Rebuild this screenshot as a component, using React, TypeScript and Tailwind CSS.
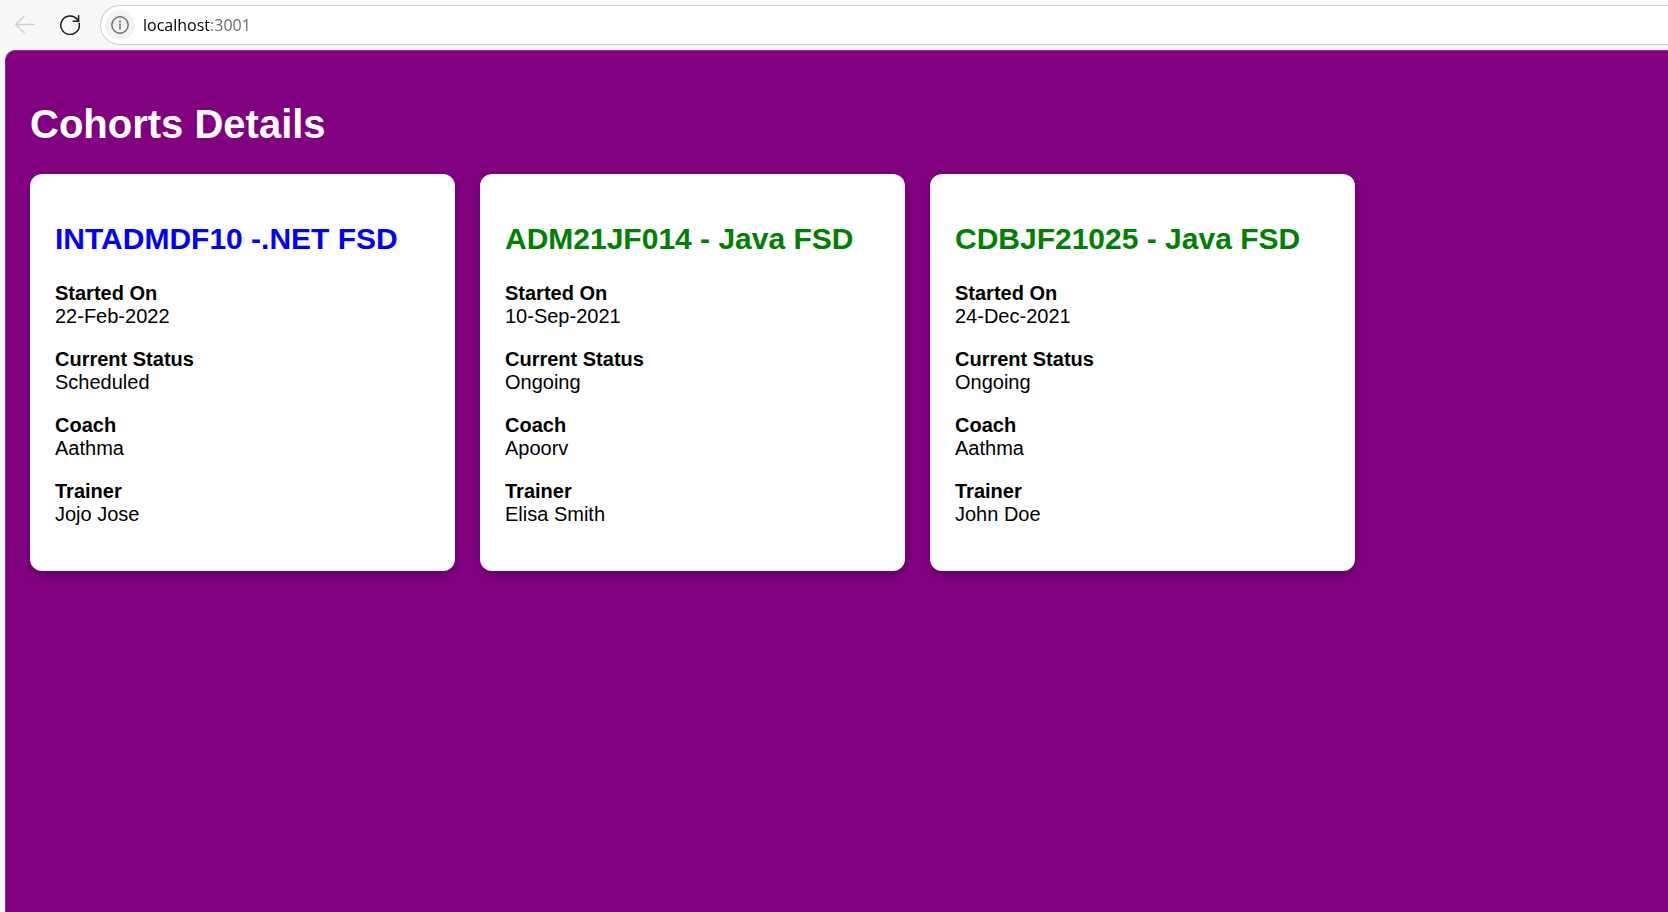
type Cohort = {
  title: string;
  startedOn: string;
  status: "Scheduled" | "Ongoing";
  coach: string;
  trainer: string;
};

const cohorts: Cohort[] = [
  { title: "INTADMDF10 -.NET FSD", startedOn: "22-Feb-2022", status: "Scheduled", coach: "Aathma", trainer: "Jojo Jose" },
  { title: "ADM21JF014 - Java FSD", startedOn: "10-Sep-2021", status: "Ongoing", coach: "Apoorv", trainer: "Elisa Smith" },
  { title: "CDBJF21025 - Java FSD", startedOn: "24-Dec-2021", status: "Ongoing", coach: "Aathma", trainer: "John Doe" },
];

function Detail({ label, value }: { label: string; value: string }) {
  return (
    <div className="flex flex-col gap-px">
      <dt className="font-bold">{label}</dt>
      <dd>{value}</dd>
    </div>
  );
}

function CohortCard({ cohort }: { cohort: Cohort }) {
  const color = cohort.status === "Ongoing" ? "text-[#008000]" : "text-[#0000ff]";
  return (
    <article className="w-[425px] rounded-xl bg-white px-[25px] pt-12 pb-[46px] shadow-[0_5px_10px_rgba(0,0,0,0.2)]">
      <h2 className={`mb-[26px] text-[30px] leading-[34px] font-bold ${color}`}>{cohort.title}</h2>
      <dl className="flex flex-col gap-[21px] text-[20px] leading-[22px] text-black">
        <Detail label="Started On" value={cohort.startedOn} />
        <Detail label="Current Status" value={cohort.status} />
        <Detail label="Coach" value={cohort.coach} />
        <Detail label="Trainer" value={cohort.trainer} />
      </dl>
    </article>
  );
}

function Toolbar() {
  return (
    <header className="flex h-[50px] items-center overflow-hidden pl-[15px]">
      <button type="button" aria-label="Back" disabled className="mr-[25px] text-[#cfcfcf]">
        <svg width="20" height="20" viewBox="0 0 20 20" fill="none" stroke="currentColor" strokeWidth="1.3" strokeLinecap="round" strokeLinejoin="round">
          <path d="M19.5 9.5H0.7M9.2 1.2L0.7 9.5l8.5 8.3" />
        </svg>
      </button>
      <button type="button" aria-label="Refresh" className="mr-5 text-[#1a1a1a]">
        <svg width="20" height="20" viewBox="0 0 20 20" fill="none" stroke="currentColor" strokeWidth="1.5" strokeLinecap="round" strokeLinejoin="round">
          <path d="M19.2 8.3A9.3 9.3 0 1 1 17.2 4.2L18.6 6.2" />
          <path d="M18.6 0.8V6.2H13.2" />
        </svg>
      </button>
      <div className="flex h-10 flex-1 items-center rounded-l-full border border-r-0 border-[#cecece] bg-white pl-1">
        <button type="button" aria-label="View site information" className="mr-2 flex size-[30px] items-center justify-center rounded-full bg-[#f3f3f3] text-[#6e6e6e]">
          <svg width="18" height="18" viewBox="0 0 18 18" fill="none" stroke="currentColor" strokeWidth="1.4">
            <circle cx="9" cy="9" r="8.2" />
            <path d="M9 8v5" strokeLinecap="round" />
            <circle cx="9" cy="5.4" r="1" fill="currentColor" stroke="none" />
          </svg>
        </button>
        <input
          type="text"
          aria-label="Address"
          defaultValue="localhost:3001"
          className="min-w-0 flex-1 bg-[linear-gradient(to_right,#000_67px,#666_67px)] bg-clip-text font-['Open_Sans',sans-serif] text-[16px] leading-6 text-transparent outline-none"
        />
      </div>
    </header>
  );
}

export default function App() {
  return (
    <div className="flex min-h-screen flex-col bg-[#f7f7f7] font-['Liberation_Sans',Arial,sans-serif]">
      <Toolbar />
      <main className="ml-[5px] flex-1 rounded-tl-[10px] border-t border-l border-[#963096] bg-[#800080] px-6 pt-[50px] pb-6">
        <h1 className="mb-[27px] text-[40px] leading-[46px] font-bold text-white">Cohorts Details</h1>
        <div className="flex flex-wrap gap-[25px]">
          {cohorts.map((cohort) => (
            <CohortCard key={cohort.title} cohort={cohort} />
          ))}
        </div>
      </main>
    </div>
  );
}
